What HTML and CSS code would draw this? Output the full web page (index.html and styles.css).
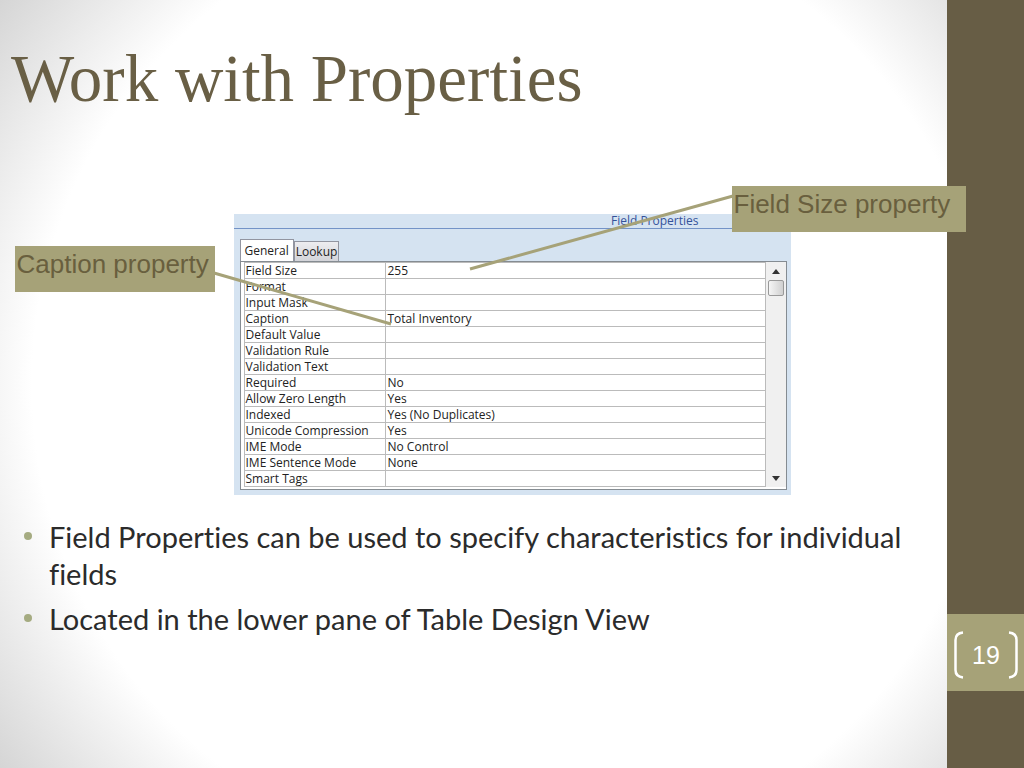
FILE: index.html
```html
<!DOCTYPE html>
<html lang="en">
<head>
<meta charset="utf-8">
<meta name="viewport" content="width=device-width, initial-scale=1">
<title>Work with Properties</title>
<link rel="stylesheet" href="styles.css">
</head>
<body>
<div class="slide">
  <main class="content">
    <h1 class="title">Work with Properties</h1>
    <div class="figure">
      <section class="panel" aria-label="Field Properties">
        <h2 class="panel-title">Field Properties</h2>
        <div class="panel-body">
          <div class="tabs">
            <button class="tab tab-active" type="button">General</button>
            <button class="tab" type="button">Lookup</button>
          </div>
          <div class="sheet">
            <table class="props">
              <tbody>
                <tr><th scope="row">Field Size</th><td>255</td></tr>
                <tr><th scope="row">Format</th><td></td></tr>
                <tr><th scope="row">Input Mask</th><td></td></tr>
                <tr><th scope="row">Caption</th><td>Total Inventory</td></tr>
                <tr><th scope="row">Default Value</th><td></td></tr>
                <tr><th scope="row">Validation Rule</th><td></td></tr>
                <tr><th scope="row">Validation Text</th><td></td></tr>
                <tr><th scope="row">Required</th><td>No</td></tr>
                <tr><th scope="row">Allow Zero Length</th><td>Yes</td></tr>
                <tr><th scope="row">Indexed</th><td>Yes (No Duplicates)</td></tr>
                <tr><th scope="row">Unicode Compression</th><td>Yes</td></tr>
                <tr><th scope="row">IME Mode</th><td>No Control</td></tr>
                <tr><th scope="row">IME Sentence Mode</th><td>None</td></tr>
                <tr><th scope="row">Smart Tags</th><td></td></tr>
              </tbody>
            </table>
            <div class="scrollbar">
              <button class="arrow" type="button" aria-label="Scroll up"><svg width="8" height="5" viewBox="0 0 8 5"><path d="M0 5L4 0L8 5Z" fill="#333"/></svg></button>
              <div class="thumb"></div>
              <button class="arrow arrow-down" type="button" aria-label="Scroll down"><svg width="8" height="5" viewBox="0 0 8 5"><path d="M0 0H8L4 5Z" fill="#333"/></svg></button>
            </div>
          </div>
        </div>
        <svg class="leaders" width="557" height="281" viewBox="0 0 557 281" aria-hidden="true">
          <path d="M-20 59L157 110M499 -18L236 55" fill="none" stroke="#a6a278" stroke-width="3"/>
        </svg>
        <div class="callout callout-caption">Caption property</div>
        <div class="callout callout-size">Field Size property</div>
      </section>
    </div>
    <ul class="points">
      <li>Field Properties can be used to specify characteristics for individual fields</li>
      <li>Located in the lower pane of Table Design View</li>
    </ul>
  </main>
  <aside class="rail">
    <div class="page">
      <svg class="bracket" width="10" height="48" viewBox="0 0 10 48" aria-hidden="true"><path d="M9 1.500C4 2 1.500 4 1.500 9V39C1.500 44 4 46 9 46.500" fill="none" stroke="#fff" stroke-width="2.500"/></svg>
      <span>19</span>
      <svg class="bracket" width="10" height="48" viewBox="0 0 10 48" aria-hidden="true"><path d="M1 1.500C6 2 8.500 4 8.500 9V39C8.500 44 6 46 1 46.500" fill="none" stroke="#fff" stroke-width="2.500"/></svg>
    </div>
  </aside>
</div>
</body>
</html>
```
FILE: styles.css
```css
* { box-sizing: border-box; }
body { margin: 0; font-family: "Open Sans", "Noto Sans", sans-serif; }

.slide {
  display: grid;
  grid-template-columns: minmax(0, 1fr) 77px;
  min-height: 100vh;
  overflow: hidden;
  background: radial-gradient(circle farthest-corner at center, #fff 75%, #f3f3f3 82%, #d5d5d5 100%);
}

.content {
  display: flex;
  flex-direction: column;
}

.title {
  margin: 0;
  padding: 38px 11px 0;
  height: 214px;
  color: #695f45;
  font: 400 67px/80px "Liberation Serif", serif;
}

.figure {
  display: flex;
  justify-content: center;
  margin-right: -77px;
}

.panel {
  position: relative;
  z-index: 1;
  width: 557px;
  background: #d5e3f1;
  color: #222;
  font-size: 12px;
}

.panel-title {
  margin: 0;
  padding-right: 92px;
  border-bottom: 1px solid #7393c7;
  color: #34529a;
  text-align: right;
  font-size: 12px;
  font-weight: 500;
  line-height: 14px;
}

.panel-body { padding: 10px 4px 5px 6px; }

.tabs { display: flex; align-items: flex-end; }

.tab {
  height: 20px;
  padding: 0 1px;
  border: 1px solid #9295a0;
  border-bottom: 0;
  background: linear-gradient(#ededf0, #d3d4d9);
  color: #222;
  font: 500 12px/18px "Open Sans", sans-serif;
}

.tab-active {
  height: 22px;
  padding: 0 4px;
  background: #fff;
}

.sheet {
  display: flex;
  padding: 0 0 2px 3px;
  border: 1px solid #858c92;
  background: #fff;
}

.props {
  flex: 1;
  border-collapse: collapse;
  table-layout: fixed;
  border: 1px solid #bbb;
}

.props th,
.props td {
  height: 16px;
  padding: 0 2px;
  border: 1px solid #bbb;
  text-align: left;
  font-weight: 400;
  line-height: 15px;
  white-space: nowrap;
}

.props th { width: 141px; padding-left: 1px; }

.scrollbar {
  display: flex;
  flex-direction: column;
  align-items: center;
  width: 20px;
  background: #f0f0f0;
}

.arrow {
  display: grid;
  place-items: center;
  width: 18px;
  height: 18px;
  padding: 0;
  border: 0;
  background: none;
}

.arrow-down { margin-top: auto; }

.thumb {
  width: 16px;
  height: 16px;
  border: 1px solid #999;
  border-radius: 2px;
  background: linear-gradient(90deg, #f5f5f5, #d0d0d0);
}

.leaders {
  position: absolute;
  top: 0;
  left: 0;
  overflow: visible;
}

.callout {
  position: absolute;
  height: 46px;
  padding: 3px 2px;
  background: #a6a278;
  color: #695f3e;
  font: 26px/30px "Liberation Sans", sans-serif;
  white-space: nowrap;
}

.callout-caption { top: 32px; left: -219px; width: 200px; }
.callout-size { top: -28px; left: 498px; width: 234px; }

.points {
  margin: 0;
  padding: 23px 32px 0 49px;
  color: #2b2b2b;
  font: 29px/37px Lato, sans-serif;
  font-variant-ligatures: none;
  list-style: none;
}

.points li { margin-bottom: 8px; }

.points li::before {
  content: "";
  float: left;
  width: 8px;
  height: 8px;
  margin: 14px 0 0 -25px;
  border-radius: 50%;
  background: #a5ab81;
}

.rail {
  display: flex;
  flex-direction: column;
  justify-content: flex-end;
  padding-bottom: 77px;
  background: #675d45;
}

.page {
  display: flex;
  align-items: center;
  justify-content: space-between;
  height: 77px;
  padding: 4px 6px 0 7px;
  background: #a6a278;
  color: #fff;
  font: 25px/30px "Liberation Sans", sans-serif;
}
```
